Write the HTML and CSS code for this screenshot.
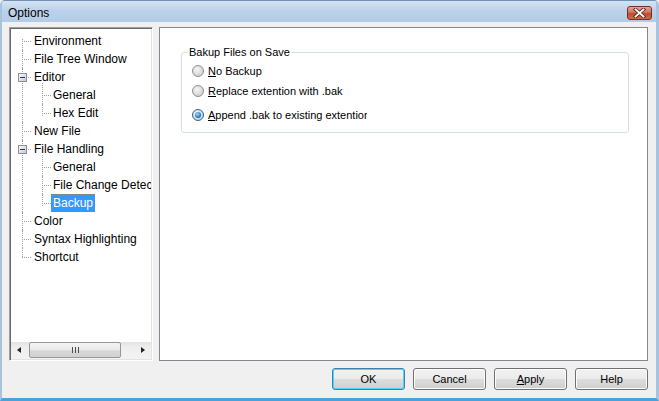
FILE: index.html
```html
<!DOCTYPE html>
<html lang="en">
<head>
    <meta charset="UTF-8">
    <title>Options</title>
    <link rel="stylesheet" href="styles.css">
</head>
<body>
    <div class="window">
        <div class="titlebar">
            <span class="title">Options</span>
            <span class="close-btn">
                <svg width="13" height="10" viewBox="0 0 13 10">
                    <path d="M2.5 1.5 L10.5 8.5 M10.5 1.5 L2.5 8.5" stroke="#5a2a22" stroke-width="3.6" stroke-linecap="square"/>
                    <path d="M2.5 1.5 L10.5 8.5 M10.5 1.5 L2.5 8.5" stroke="#fff" stroke-width="1.8" stroke-linecap="square"/>
                </svg>
            </span>
        </div>
        <div class="client">
            <div class="main">
                <div class="tree-panel">
                    <div class="tree-view">
                        <ul class="tree">
                            <li><span class="label">Environment</span></li>
                            <li><span class="label">File Tree Window</span></li>
                            <li>
                                <span class="expander"></span><span class="label">Editor</span>
                                <ul>
                                    <li><span class="label">General</span></li>
                                    <li><span class="label">Hex Edit</span></li>
                                </ul>
                            </li>
                            <li><span class="label">New File</span></li>
                            <li>
                                <span class="expander"></span><span class="label">File Handling</span>
                                <ul>
                                    <li><span class="label">General</span></li>
                                    <li><span class="label">File Change Detect</span></li>
                                    <li><span class="label selected">Backup</span></li>
                                </ul>
                            </li>
                            <li><span class="label">Color</span></li>
                            <li><span class="label">Syntax Highlighting</span></li>
                            <li><span class="label">Shortcut</span></li>
                        </ul>
                    </div>
                    <div class="hscroll">
                        <span class="arrow arrow-left"></span>
                        <div class="track">
                            <span class="thumb"><span class="grip"></span></span>
                        </div>
                        <span class="arrow arrow-right"></span>
                    </div>
                </div>
                <div class="page">
                    <fieldset class="group">
                        <legend>Bakup Files on Save</legend>
                        <label class="radio"><span class="radio-dot"></span><span class="radio-text"><u>N</u>o Backup</span></label>
                        <label class="radio second"><span class="radio-dot"></span><span class="radio-text"><u>R</u>eplace extention with .bak</span></label>
                        <label class="radio third"><span class="radio-dot checked"></span><span class="radio-text"><u>A</u>ppend .bak to existing extention</span></label>
                    </fieldset>
                </div>
            </div>
            <div class="buttons">
                <button class="btn default">OK</button>
                <button class="btn">Cancel</button>
                <button class="btn"><u>A</u>pply</button>
                <button class="btn">Help</button>
            </div>
        </div>
    </div>
</body>
</html>
```

FILE: styles.css
```css
html, body {
    margin: 0;
    padding: 0;
}
body {
    font-family: "Liberation Sans", Arial, sans-serif;
    font-size: 12px;
    color: #000;
    background: #f0f0f0;
}
.window {
    box-sizing: border-box;
    width: 659px;
    height: 401px;
    display: flex;
    flex-direction: column;
    background: #f0f0f0;
    border-left: 2px solid #a9c2de;
    border-right: 3px solid #a9c2de;
    border-bottom: 3px solid #4f9fd8;
    border-top: 1px solid #6f8fb5;
    border-radius: 5px 5px 0 0;
    overflow: hidden;
}
.titlebar {
    height: 22px;
    display: flex;
    align-items: center;
    justify-content: space-between;
    padding: 0 4px 0 6px;
    background: linear-gradient(to bottom, #d5e3f2, #bcd2ea 45%, #b3cbe7);
}
.title {
    font-size: 12px;
    color: #000;
    padding-top: 2px;
}
.close-btn {
    width: 25px;
    height: 14px;
    box-sizing: border-box;
    display: flex;
    align-items: center;
    justify-content: center;
    border: 1px solid #6f3027;
    border-radius: 3px;
    background: linear-gradient(to bottom, #e5a496, #d0735f 45%, #c04a31 55%, #d26a4c);
    margin-top: 2px;
}
.client {
    flex: 1;
    display: flex;
    flex-direction: column;
    padding: 5px 8px 8px 7px;
}
.main {
    display: flex;
    gap: 6px;
    height: 334px;
}

/* tree */
.tree-panel {
    width: 144px;
    box-sizing: border-box;
    display: flex;
    flex-direction: column;
    background: #fff;
    border-top: 1px solid #a0a0a0;
    border-left: 1px solid #a0a0a0;
    border-right: 1px solid #fff;
    border-bottom: 1px solid #fff;
    box-shadow: inset 1px 1px 0 #696969, inset -1px -1px 0 #e3e3e3;
    padding: 1px;
}
.tree-view {
    flex: 1;
    overflow: hidden;
    white-space: nowrap;
    padding-top: 3px;
}
.tree, .tree ul {
    list-style: none;
    margin: 0;
    padding: 0;
}
.tree {
    margin-left: 11px;
}
.tree li {
    position: relative;
    padding-left: 10px;
    line-height: 18px;
}
.tree ul {
    margin-left: 10px;
}
.tree ul li {
    padding-left: 9px;
}
.tree li::before {
    content: "";
    position: absolute;
    left: 0;
    top: 9px;
    width: 9px;
    border-top: 1px dotted #a0a0a0;
}
.tree li::after {
    content: "";
    position: absolute;
    left: 0;
    top: 0;
    bottom: 0;
    border-left: 1px dotted #a0a0a0;
}
.tree > li:first-child::after {
    top: 7px;
}
.tree li:last-child::after {
    bottom: auto;
    height: 9px;
}
.tree ul li:first-child::after {
    top: -3px;
}
.tree ul li:last-child::after {
    height: 12px;
}
.label {
    display: inline-block;
    padding: 0 2px;
    height: 18px;
    box-sizing: border-box;
}
.label.selected {
    background: #3399ff;
    color: #fff;
    outline: 1px dotted #c87a1e;
    outline-offset: -1px;
}
.expander {
    position: absolute;
    left: -4px;
    top: 5px;
    width: 9px;
    height: 9px;
    box-sizing: border-box;
    border: 1px solid #8e8f8f;
    background: linear-gradient(to bottom right, #fff, #c6c6c6);
    z-index: 1;
}
.expander::after {
    content: "";
    position: absolute;
    left: 1px;
    top: 3px;
    width: 5px;
    height: 1px;
    background: #1a3b7a;
}

/* scrollbar */
.hscroll {
    height: 17px;
    display: flex;
    align-items: center;
    background: linear-gradient(to bottom, #e3e3e3, #eeeeee 30%, #f3f3f3);
}
.arrow {
    width: 17px;
    height: 17px;
    position: relative;
}
.arrow::after {
    content: "";
    position: absolute;
    top: 5px;
    border-top: 3.5px solid transparent;
    border-bottom: 3.5px solid transparent;
}
.arrow-left::after {
    left: 6px;
    border-right: 4px solid #222;
}
.arrow-right::after {
    left: 7px;
    border-left: 4px solid #222;
}
.track {
    flex: 1;
    height: 17px;
}
.thumb {
    display: flex;
    align-items: center;
    justify-content: center;
    margin-left: 1px;
    width: 92px;
    height: 16px;
    box-sizing: border-box;
    border: 1px solid #979797;
    border-radius: 2px;
    background: linear-gradient(to bottom, #f4f4f4, #e9e9e9 50%, #d8d8d8 55%, #d1d1d1);
}
.grip {
    width: 7px;
    height: 6px;
    background: repeating-linear-gradient(to right, #4d4d4d 0 1px, transparent 1px 3px);
}

/* right page */
.page {
    flex: 1;
    background: #fff;
    border: 1px solid #828790;
    display: flex;
    flex-direction: column;
    font-size: 11px;
}
.group {
    margin: 17px 18px 0 21px;
    padding: 3px 0 8px 6px;
    border: 1px solid #d5dfe5;
    border-radius: 3px;
    min-width: 0;
}
.group legend {
    padding: 0 1px;
    line-height: 14px;
    font-size: 11px;
}
.radio {
    display: flex;
    align-items: center;
    gap: 4px;
    width: 175px;
    height: 18px;
    margin-left: 4px;
    overflow: hidden;
    white-space: nowrap;
}
.radio.second {
    margin-top: 2px;
}
.radio.third {
    margin-top: 6px;
}
.radio-dot {
    flex: none;
    width: 12px;
    height: 12px;
    box-sizing: border-box;
    border-radius: 50%;
    border: 1px solid #8e8f8f;
    background: radial-gradient(circle at 40% 35%, #f6f6f6, #d4d4d4 70%, #c8c8c8);
    position: relative;
}
.radio-dot.checked {
    border-color: #2c628b;
}
.radio-dot.checked::after {
    content: "";
    position: absolute;
    left: 2px;
    top: 2px;
    width: 6px;
    height: 6px;
    border-radius: 50%;
    background: radial-gradient(circle at 40% 35%, #a6dcfa, #1f7fd0 60%, #0b3f7a);
}
.radio-text {
    overflow: hidden;
}

/* buttons */
.buttons {
    display: flex;
    justify-content: flex-end;
    gap: 8px;
    margin-top: 7px;
}
.btn {
    width: 73px;
    height: 22px;
    font-family: "Liberation Sans", Arial, sans-serif;
    font-size: 11px;
    color: #000;
    border: 1px solid #707070;
    border-radius: 3px;
    background: linear-gradient(to bottom, #f2f2f2, #ebebeb 49%, #dddddd 50%, #cfcfcf);
    box-shadow: inset 0 0 0 1px #fcfcfc;
    padding: 0;
}
.btn.default {
    border-color: #3c7fb1;
    box-shadow: inset 0 0 0 1px #48d8fb;
}
```
